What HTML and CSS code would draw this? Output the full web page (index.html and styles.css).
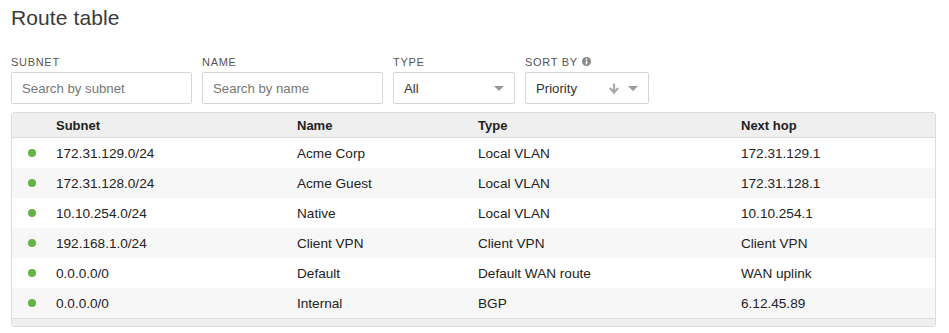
FILE: index.html
```html
<!DOCTYPE html>
<html>
<head>
<meta charset="utf-8">
<link rel="stylesheet" href="styles.css">
</head>
<body>
<div class="page">
  <h1 class="title">Route table</h1>
  <div class="filters">
    <div class="field f-subnet">
      <label class="flabel">SUBNET</label>
      <div class="input"><span class="ph">Search by subnet</span></div>
    </div>
    <div class="field f-name">
      <label class="flabel">NAME</label>
      <div class="input"><span class="ph">Search by name</span></div>
    </div>
    <div class="field f-type">
      <label class="flabel">TYPE</label>
      <div class="input select"><span class="val">All</span><span class="caret"></span></div>
    </div>
    <div class="field f-sort">
      <label class="flabel">SORT BY <svg class="info" width="9" height="9" viewBox="0 0 10 10"><circle cx="5" cy="5" r="5" fill="#888"/><rect x="4.1" y="4.2" width="1.8" height="4" fill="#fff"/><circle cx="5" cy="2.6" r="1" fill="#fff"/></svg></label>
      <div class="input select"><span class="val">Priority</span><svg class="arrow" width="10" height="11" viewBox="0 0 10 11"><path d="M5 0.5 V9" stroke="#aaa" stroke-width="2.2"/><path d="M0.8 5 L5 9.5 L9.2 5" fill="none" stroke="#aaa" stroke-width="2.2"/></svg><span class="caret"></span></div>
    </div>
  </div>
  <div class="table">
    <div class="row head">
      <div class="c dot"></div>
      <div class="c subnet">Subnet</div>
      <div class="c name">Name</div>
      <div class="c type">Type</div>
      <div class="c hop">Next hop</div>
    </div>
    <div class="row">
      <div class="c dot"><span class="d"></span></div>
      <div class="c subnet">172.31.129.0/24</div>
      <div class="c name">Acme Corp</div>
      <div class="c type">Local VLAN</div>
      <div class="c hop">172.31.129.1</div>
    </div>
    <div class="row alt">
      <div class="c dot"><span class="d"></span></div>
      <div class="c subnet">172.31.128.0/24</div>
      <div class="c name">Acme Guest</div>
      <div class="c type">Local VLAN</div>
      <div class="c hop">172.31.128.1</div>
    </div>
    <div class="row">
      <div class="c dot"><span class="d"></span></div>
      <div class="c subnet">10.10.254.0/24</div>
      <div class="c name">Native</div>
      <div class="c type">Local VLAN</div>
      <div class="c hop">10.10.254.1</div>
    </div>
    <div class="row alt">
      <div class="c dot"><span class="d"></span></div>
      <div class="c subnet">192.168.1.0/24</div>
      <div class="c name">Client VPN</div>
      <div class="c type">Client VPN</div>
      <div class="c hop">Client VPN</div>
    </div>
    <div class="row">
      <div class="c dot"><span class="d"></span></div>
      <div class="c subnet">0.0.0.0/0</div>
      <div class="c name">Default</div>
      <div class="c type">Default WAN route</div>
      <div class="c hop">WAN uplink</div>
    </div>
    <div class="row alt">
      <div class="c dot"><span class="d"></span></div>
      <div class="c subnet">0.0.0.0/0</div>
      <div class="c name">Internal</div>
      <div class="c type">BGP</div>
      <div class="c hop">6.12.45.89</div>
    </div>
    <div class="foot"></div>
  </div>
</div>
</body>
</html>
```

FILE: styles.css
```css
* { box-sizing: border-box; }
html, body { margin: 0; padding: 0; background: #fff; }
body {
  font-family: "Liberation Sans", Arial, sans-serif;
  color: #222;
  font-size: 13px;
}
.page { padding: 5px 13px 0 11px; }
.title {
  margin: 0;
  font-weight: 300;
  font-size: 21px;
  line-height: 26px;
  color: #3a3a3a;
  font-family: "Liberation Sans", Arial, sans-serif;
  letter-spacing: 0.1px;
}
.filters {
  display: flex;
  gap: 10px;
  margin-top: 25px;
}
.field { display: flex; flex-direction: column; }
.flabel {
  font-size: 11px;
  letter-spacing: 0.7px;
  color: #555;
  line-height: 12px;
  height: 12px;
  margin-bottom: 4px;
  display: flex;
  align-items: center;
  gap: 4px;
}
.info { margin-top: -1px; }
.input {
  height: 32px;
  border: 1px solid #d6d6d6;
  border-radius: 2px;
  display: flex;
  align-items: center;
  padding: 0 10px;
  font-size: 13.2px;
}
.ph { color: #777; }
.val { color: #333; flex: 1; }
.f-subnet .input, .f-name .input { width: 181px; }
.f-type .input { width: 122px; }
.f-sort { margin-left: 0; }
.f-sort .input { width: 124px; }
.caret {
  width: 0; height: 0;
  border-left: 5px solid transparent;
  border-right: 5px solid transparent;
  border-top: 5px solid #999;
}
.arrow { margin-right: 9px; }
.table {
  margin-top: 8px;
  border: 1px solid #dcdcdc;
  border-radius: 3px;
  overflow: hidden;
}
.row {
  display: flex;
  height: 30px;
  align-items: center;
  font-size: 13.6px;
}
.row.head {
  height: 25px;
  background: #efefef;
  border-bottom: 1px solid #dcdcdc;
  font-weight: bold;
  color: #222;
  font-size: 13px;
}
.row.alt { background: #f7f7f7; }
.c { white-space: nowrap; }
.dot { width: 44px; padding-left: 16px; display: flex; align-items: center; }
.d { width: 8px; height: 8px; border-radius: 50%; background: #67b346; display: block; }
.subnet { width: 241px; }
.name { width: 181px; }
.type { width: 263px; }
.hop { flex: 1; }
.foot {
  height: 8px;
  background: #efefef;
  border-top: 1px solid #dcdcdc;
}
```
